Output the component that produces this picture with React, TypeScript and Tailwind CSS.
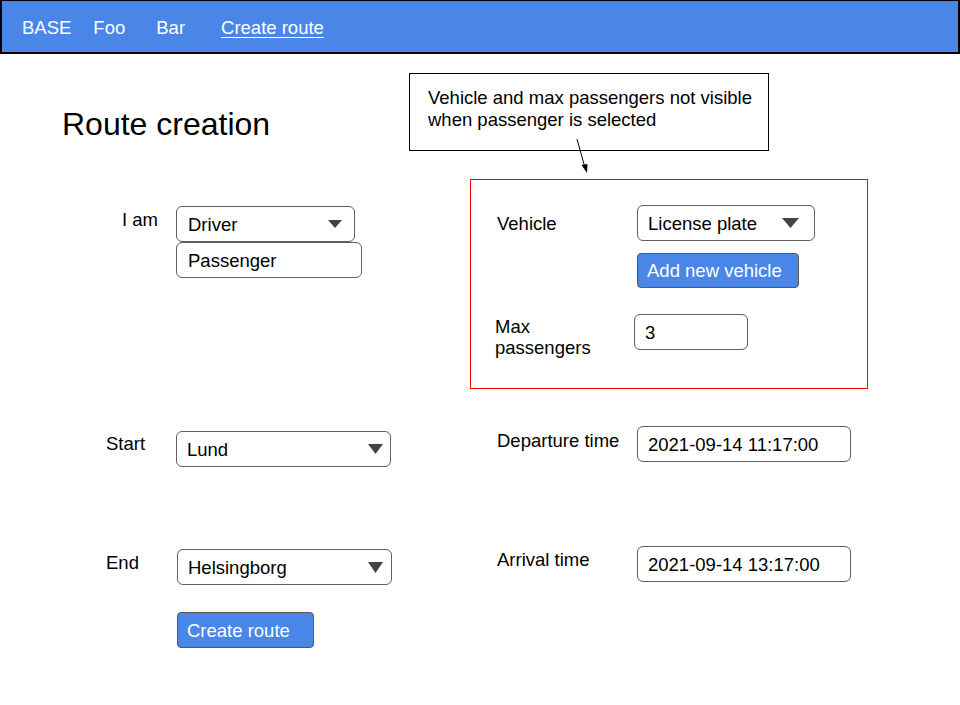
import React from "react";

function Tri({ w, h }: { w: number; h: number }) {
  return (
    <svg width={w} height={h} viewBox={`0 0 ${w} ${h}`} className="shrink-0">
      <polygon points={`0,0 ${w},0 ${w / 2},${h}`} fill="#434343" />
    </svg>
  );
}

export default function App() {
  return (
    <div className="relative w-[960px] h-[705px] overflow-hidden bg-white text-black font-['Liberation_Sans',Arial,sans-serif] text-[18.5px] leading-[21px]">
      {/* Header */}
      <header className="h-[54px] bg-[#4a86e8] border-t border-l-2 border-r-2 border-b-2 border-black flex items-center pt-[2px] text-white">
        <span className="ml-[20px]">BASE</span>
        <span className="ml-[22px]">Foo</span>
        <span className="ml-[31px]">Bar</span>
        <span className="ml-[36px] underline underline-offset-[3px]">Create route</span>
      </header>

      {/* Row A: title + note */}
      <div className="flex mt-[19px]">
        <div className="w-[409px] pl-[62px] pt-[35px]">
          <h1 className="text-[32px] leading-none">Route creation</h1>
        </div>
        <div className="w-[360px] h-[78px] border border-black pl-[18px] pt-[13px] leading-[22px]">
          Vehicle and max passengers not visible
          <br />
          when passenger is selected
        </div>
      </div>

      {/* Row B: I am + vehicle box */}
      <div className="flex mt-[28px]">
        <div className="w-[470px] flex pl-[122px]">
          <div className="w-[54px] pt-[30px]">I am</div>
          <div className="pt-[27px] flex flex-col">
            <div className="w-[179px] h-[36px] border border-[#5f5f5f] rounded-[6px] flex items-center justify-between pl-[11px] pr-[12px]">
              <span>Driver</span>
              <Tri w={14} h={8} />
            </div>
            <div className="w-[186px] h-[36px] border border-[#5f5f5f] rounded-[6px] flex items-center pl-[11px]">
              Passenger
            </div>
          </div>
        </div>
        <div className="w-[398px] h-[210px] border border-[#ff0000]">
          <div className="flex mt-[25px] pl-[26px]">
            <div className="w-[140px] pt-[8px]">Vehicle</div>
            <div className="w-[178px] h-[36px] border border-[#5f5f5f] rounded-[6px] flex items-center justify-between pl-[10px] pr-[15px]">
              <span>License plate</span>
              <Tri w={17} h={10} />
            </div>
          </div>
          <div className="mt-[12px] ml-[166px] w-[162px] h-[35px] bg-[#4a86e8] border border-[#595959] rounded-[4px] flex items-center pl-[9px] text-white">
            Add new vehicle
          </div>
          <div className="flex mt-[26px] pl-[24px]">
            <div className="w-[139px] pt-[2px]">
              Max
              <br />
              passengers
            </div>
            <div className="w-[114px] h-[36px] border border-[#5f5f5f] rounded-[6px] flex items-center pl-[10px]">
              3
            </div>
          </div>
        </div>
      </div>

      {/* Row C: Start + departure */}
      <div className="flex mt-[37px]">
        <div className="w-[470px] flex pl-[106px]">
          <div className="w-[70px] pt-[7px]">Start</div>
          <div className="mt-[5px] w-[215px] h-[36px] border border-[#5f5f5f] rounded-[6px] flex items-center justify-between pl-[10px] pr-[7px]">
            <span>Lund</span>
            <Tri w={15} h={10} />
          </div>
        </div>
        <div className="flex pl-[27px]">
          <div className="w-[140px] pt-[4px]">Departure time</div>
          <div className="w-[214px] h-[36px] border border-[#5f5f5f] rounded-[6px] flex items-center pl-[10px]">
            2021-09-14 11:17:00
          </div>
        </div>
      </div>

      {/* Row D: End + arrival */}
      <div className="flex mt-[79px]">
        <div className="w-[470px] flex pl-[106px]">
          <div className="w-[71px] pt-[6px]">End</div>
          <div className="mt-[3px] w-[215px] h-[36px] border border-[#5f5f5f] rounded-[6px] flex items-center justify-between pl-[10px] pr-[8px]">
            <span>Helsingborg</span>
            <Tri w={15} h={11} />
          </div>
        </div>
        <div className="flex pl-[27px]">
          <div className="w-[140px] pt-[3px]">Arrival time</div>
          <div className="w-[214px] h-[36px] border border-[#5f5f5f] rounded-[6px] flex items-center pl-[10px]">
            2021-09-14 13:17:00
          </div>
        </div>
      </div>

      {/* Row E: create button */}
      <div className="mt-[27px] ml-[177px] w-[137px] h-[36px] bg-[#4a86e8] border border-[#595959] rounded-[4px] flex items-center pl-[9px] text-white">
        Create route
      </div>

      {/* Annotation arrow */}
      <svg className="absolute left-0 top-0 pointer-events-none" width="960" height="705">
        <line x1="577" y1="139" x2="584.5" y2="166" stroke="#000" strokeWidth="1" />
        <polygon points="581.5,165 587,173 587.5,164" fill="#000" />
      </svg>
    </div>
  );
}
